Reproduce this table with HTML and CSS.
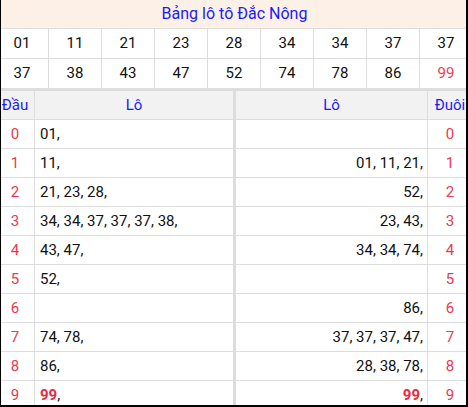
FILE: index.html
```html
<!DOCTYPE html>
<html lang="vi">
<head>
<meta charset="utf-8">
<title>Bảng lô tô Đắc Nông</title>
<link rel="stylesheet" href="styles.css">
</head>
<body>
<div class="frame">
  <div class="content">
    <div class="title">Bảng lô tô Đắc Nông</div>
    <div class="nums">
      <div class="n">01</div><div class="n">11</div><div class="n">21</div><div class="n">23</div><div class="n">28</div><div class="n">34</div><div class="n">34</div><div class="n">37</div><div class="n">37</div>
    </div>
    <div class="nums">
      <div class="n">37</div><div class="n">38</div><div class="n">43</div><div class="n">47</div><div class="n">52</div><div class="n">74</div><div class="n">78</div><div class="n">86</div><div class="n hot">99</div>
    </div>

    <div class="loto">
      <div class="row head">
        <div class="c key">Đầu</div><div class="c mid">Lô</div><div class="c mid split">Lô</div><div class="c key">Đuôi</div>
      </div>
      <div class="row"><div class="c key red">0</div><div class="c left">01,</div><div class="c right split"></div><div class="c key red">0</div></div>
      <div class="row"><div class="c key red">1</div><div class="c left">11,</div><div class="c right split">01, 11, 21,</div><div class="c key red">1</div></div>
      <div class="row"><div class="c key red">2</div><div class="c left">21, 23, 28,</div><div class="c right split">52,</div><div class="c key red">2</div></div>
      <div class="row"><div class="c key red">3</div><div class="c left">34, 34, 37, 37, 37, 38,</div><div class="c right split">23, 43,</div><div class="c key red">3</div></div>
      <div class="row"><div class="c key red">4</div><div class="c left">43, 47,</div><div class="c right split">34, 34, 74,</div><div class="c key red">4</div></div>
      <div class="row"><div class="c key red">5</div><div class="c left">52,</div><div class="c right split"></div><div class="c key red">5</div></div>
      <div class="row"><div class="c key red">6</div><div class="c left"></div><div class="c right split">86,</div><div class="c key red">6</div></div>
      <div class="row"><div class="c key red">7</div><div class="c left">74, 78,</div><div class="c right split">37, 37, 37, 47,</div><div class="c key red">7</div></div>
      <div class="row"><div class="c key red">8</div><div class="c left">86,</div><div class="c right split">28, 38, 78,</div><div class="c key red">8</div></div>
      <div class="row"><div class="c key red">9</div><div class="c left"><b class="hotb">99</b>,</div><div class="c right split"><b class="hotb">99</b>,</div><div class="c key red">9</div></div>
    </div>
  </div>
</div>
</body>
</html>
```

FILE: styles.css
```css
* { box-sizing: border-box; }
html, body { margin: 0; padding: 0; background: #fff; }
body {
  font-family: Roboto, "Liberation Sans", Arial, sans-serif;
  font-size: 15px;
  color: #111;
}
.frame {
  width: 468px;
  height: 407px;
  border-left: 1px solid #000;
  border-right: 2px solid #000;
  border-bottom: 2px solid #000;
  overflow: hidden;
}
.content {
  width: 477px;
  margin-left: -5px;
}
.title {
  height: 29px;
  line-height: 28px;
  text-align: center;
  font-size: 16px;
  color: #1a1aff;
  background: #fdf1e7;
  border-bottom: 1px solid #ddd;
}
.nums {
  display: grid;
  grid-template-columns: repeat(9, 53px);
  height: 30px;
}
.n {
  border-right: 1px solid #ddd;
  border-bottom: 1px solid #ddd;
  text-align: center;
  line-height: 29px;
}
.n.hot { color: #f0404e; }
.loto {
  border-top: 2px solid #ddd;
}
.row {
  display: grid;
  grid-template-columns: 39px 199px 194px 45px;
  height: 29px;
}
.row.head {
  height: 29px;
  background: #f2f2f2;
}
.c {
  border-right: 1px solid #ddd;
  border-bottom: 1px solid #ddd;
  line-height: 28px;
  white-space: nowrap;
  overflow: hidden;
}
.head .c { color: #1a1aff; }
.c.split { border-left: 2px solid #ddd; }
.key, .mid { text-align: center; }
.left { text-align: left; padding-left: 5px; }
.right { text-align: right; padding-right: 4px; }
.red { color: #ea3a50; }
.hotb { color: #ea2840; font-weight: bold; }
```
